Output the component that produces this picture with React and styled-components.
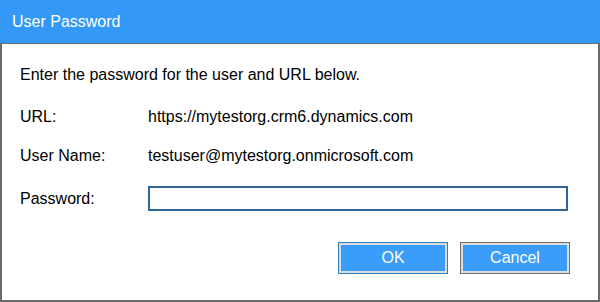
import React from 'react';
import styled, { createGlobalStyle } from 'styled-components';

const Global = createGlobalStyle`
  html, body {
    margin: 0;
    padding: 0;
    background: #fff;
  }
  body {
    font-family: "Liberation Sans", Arial, sans-serif;
  }
`;

const Dialog = styled.div`
  width: 600px;
  height: 302px;
  display: flex;
  flex-direction: column;
  box-sizing: border-box;
`;

const TitleBar = styled.div`
  height: 43px;
  background: #3498f6;
  color: #fff;
  font-size: 16px;
  display: flex;
  align-items: center;
  padding: 0 12px;
  box-sizing: border-box;
`;

const Body = styled.div`
  flex: 1;
  border: 2px solid #6b6b6b;
  border-top: 1px solid #6b6b6b;
  padding: 22px 28px 0 18px;
  box-sizing: border-box;
  color: #000;
  font-size: 16px;
  line-height: 18px;
`;

const Intro = styled.p`
  margin: 0 0 24px;
`;

const Row = styled.div`
  display: grid;
  grid-template-columns: 128px 1fr;
  align-items: center;
  height: ${({ $h }) => $h || 18}px;
  margin-bottom: ${({ $gap }) => $gap || 0}px;
`;

const Input = styled.input`
  height: 25px;
  width: 420px;
  box-sizing: border-box;
  border: 2px solid #2f6598;
  outline: none;
  padding: 0 4px;
  font: inherit;
`;

const Actions = styled.div`
  display: flex;
  justify-content: flex-end;
  gap: 12px;
  margin-top: 31px;
`;

const Button = styled.button`
  width: 110px;
  height: 32px;
  box-sizing: border-box;
  border: 1px solid ${({ $primary }) => ($primary ? '#2a7fc0' : '#6f6f6f')};
  box-shadow: inset 0 0 0 2px #dcdcdc;
  background: #3a9cfb;
  color: #fff;
  font-family: "Liberation Sans", Arial, sans-serif;
  font-size: 16px;
  padding: 0;
`;

export default function App() {
  return (
    <>
      <Global />
      <Dialog>
        <TitleBar>User Password</TitleBar>
        <Body>
          <Intro>Enter the password for the user and URL below.</Intro>
          <Row $gap={21}>
            <span>URL:</span>
            <span>https://mytestorg.crm6.dynamics.com</span>
          </Row>
          <Row $gap={21}>
            <span>User Name:</span>
            <span>testuser@mytestorg.onmicrosoft.com</span>
          </Row>
          <Row $h={25}>
            <span>Password:</span>
            <Input type="password" />
          </Row>
          <Actions>
            <Button $primary>OK</Button>
            <Button>Cancel</Button>
          </Actions>
        </Body>
      </Dialog>
    </>
  );
}
